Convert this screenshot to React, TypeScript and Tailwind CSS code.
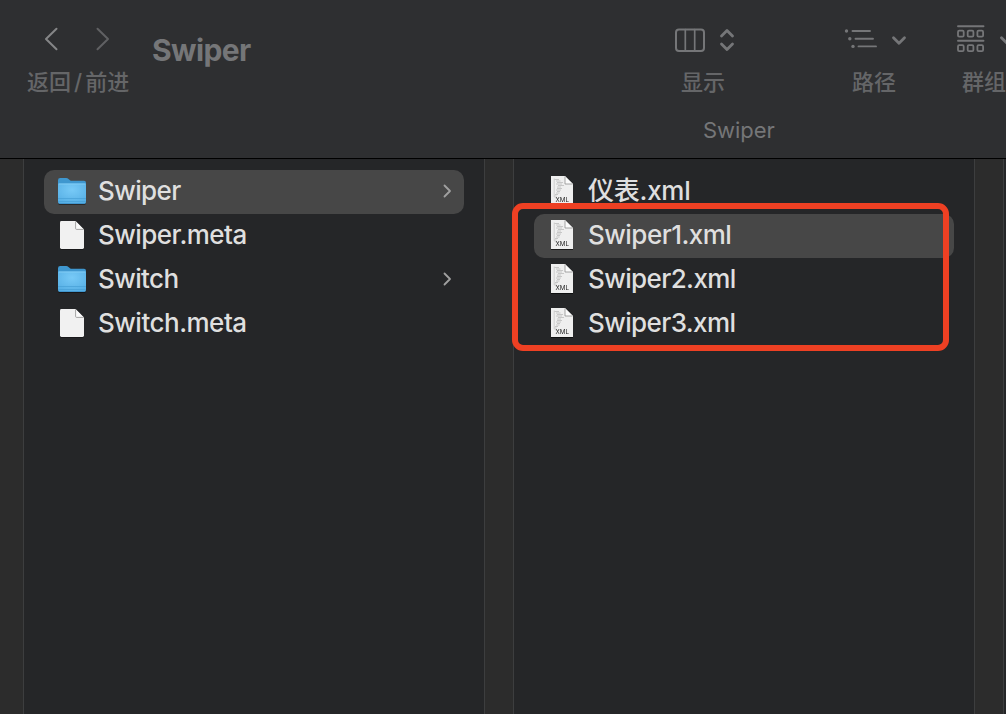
import type { ReactNode } from 'react';

type Kind = 'folder' | 'blank' | 'xml';
type Item = { name: string; kind: Kind; selected?: boolean; tracking: string };

const leftItems: Item[] = [
  { name: 'Swiper', kind: 'folder', selected: true, tracking: 'tracking-[-0.6px]' },
  { name: 'Swiper.meta', kind: 'blank', tracking: 'tracking-[-0.55px]' },
  { name: 'Switch', kind: 'folder', tracking: 'tracking-[-0.6px]' },
  { name: 'Switch.meta', kind: 'blank', tracking: 'tracking-[-0.5px]' },
];

const rightItems: Item[] = [
  { name: '仪表.xml', kind: 'xml', tracking: 'tracking-[-0.25px]' },
  { name: 'Swiper1.xml', kind: 'xml', selected: true, tracking: 'tracking-[-0.52px]' },
  { name: 'Swiper2.xml', kind: 'xml', tracking: 'tracking-[-0.6px]' },
  { name: 'Swiper3.xml', kind: 'xml', tracking: 'tracking-[-0.6px]' },
];

function FolderIcon() {
  return (
    <svg width="30" height="30" viewBox="0 0 30 30" className="drop-shadow-[0_1px_0.5px_rgba(0,0,0,0.4)]">
      <defs>
        <radialGradient id="folderFront" cx="0.5" cy="0.3" r="0.75">
          <stop offset="0" stopColor="#78caf7" />
          <stop offset="1" stopColor="#55aee4" />
        </radialGradient>
      </defs>
      <path d="M1 3.2Q1 1 3.2 1H9.2Q10.6 1 11.5 1.9L13 3.2Q13.6 3.8 14.8 3.8H27Q29 3.8 29 5.8V12H1Z" fill="#3f97cf" />
      <path d="M1 7.8Q1 6.5 2.3 6.5H27.7Q29 6.5 29 7.8V25Q29 27 27 27H3Q1 27 1 25Z" fill="url(#folderFront)" />
      <path d="M1.5 7H28.5" stroke="#8cd2f7" strokeWidth="0.8" />
      <path d="M1 21.5H29M1 24.5H29" stroke="#469fd6" strokeWidth="0.7" />
      <path d="M2 26.6H28" stroke="#3a8dc4" strokeWidth="0.8" />
    </svg>
  );
}

function BlankFileIcon() {
  return (
    <svg width="24" height="28" viewBox="0 0 24 28" className="mb-0.5 drop-shadow-[0_1px_0.5px_rgba(0,0,0,0.35)]">
      <path d="M1.4 0H15.6L24 8.4V26.6Q24 28 22.6 28H1.4Q0 28 0 26.6V1.4Q0 0 1.4 0Z" fill="#f1f1f1" />
      <path d="M15.6 0.2V7.4Q15.6 8.4 16.6 8.4H23.8Z" fill="#fafafa" />
      <path d="M15.6 0.4V7.4Q15.6 8.4 16.6 8.4H23.6" fill="none" stroke="#8f8f8f" strokeWidth="0.8" />
    </svg>
  );
}

const codeLines = [
  'M3 3.5H8', 'M5 5H9.5', 'M6 6.5H12', 'M5 8H11', 'M7 9.5H13', 'M6 11H10',
  'M6 12.5H11', 'M5 14H10', 'M6 15.5H9', 'M5 17H8.5', 'M4 18.5H7', 'M3 20H5.5',
].join('');

function XmlFileIcon() {
  return (
    <svg width="22" height="29" viewBox="0 0 22 29" className="mb-[3px] drop-shadow-[0_1px_0.5px_rgba(0,0,0,0.6)]">
      <path d="M0 0H14L22 8V29H0Z" fill="#efefef" />
      <path d={codeLines} stroke="#c2c2c2" strokeWidth="0.9" />
      <path d="M3.2 2.5V20.5L5 22.5" stroke="#cfcfcf" strokeWidth="1" fill="none" />
      <path d="M14 0.2V8H21.8Z" fill="#fbfbfb" />
      <path d="M14 0.4V8H21.6" fill="none" stroke="#8f8f8f" strokeWidth="0.8" />
      <text x="11.2" y="25.8" textAnchor="middle" textLength="13.4" lengthAdjust="spacingAndGlyphs" fontSize="5.8" fontFamily="Inter, sans-serif" fontWeight="400" fill="#1c1c1c">
        XML
      </text>
    </svg>
  );
}

function FileIcon({ kind }: { kind: Kind }) {
  if (kind === 'folder') return <FolderIcon />;
  if (kind === 'blank') return <BlankFileIcon />;
  return <XmlFileIcon />;
}

function Row({ item }: { item: Item }) {
  return (
    <li className={`flex h-11 items-center rounded-[10px] pl-3 pr-3 ${item.selected ? 'bg-[#474747]' : ''}`}>
      <span className="flex w-8 shrink-0 justify-center">
        <FileIcon kind={item.kind} />
      </span>
      <span className={`mb-0.5 ml-2.5 flex-1 whitespace-nowrap text-[26px] font-medium leading-8 text-[#dfdfdf] ${item.tracking}`}>{item.name}</span>
      {item.kind === 'folder' && (
        <svg width="9" height="14" viewBox="0 0 9 14" className="mb-0.5" fill="none" stroke="#a0a0a0" strokeWidth="1.8" strokeLinecap="round" strokeLinejoin="round">
          <path d="M1.5 1.5L7 7L1.5 12.5" />
        </svg>
      )}
    </li>
  );
}

function Column({ items, children }: { items: Item[]; children?: ReactNode }) {
  return (
    <section className="relative w-[461px] shrink-0 border-r border-[#3d3e3f] bg-[#252628] pl-5 pr-5 pt-[11px]">
      <ul>
        {items.map((item) => (
          <Row key={item.name} item={item} />
        ))}
      </ul>
      {children}
    </section>
  );
}

function Label({ children }: { children: ReactNode }) {
  return <span className="whitespace-nowrap text-[22px] font-medium leading-7 text-[#656668]">{children}</span>;
}

function Toolbar() {
  return (
    <header className="h-[159px] overflow-hidden border-b border-black bg-[#2e2f31]">
      <div className="flex h-[115px]">
        <div className="flex w-[152px] shrink-0 flex-col pl-[27px] pt-6">
          <div className="flex h-[30px] items-center gap-[38px] pl-[17px]">
            <svg width="14" height="24" viewBox="0 0 14 24" fill="none" stroke="#858687" strokeWidth="2" strokeLinecap="round" strokeLinejoin="round">
              <path d="M12.5 1.7L2 12L12.5 22.3" />
            </svg>
            <svg width="14" height="24" viewBox="0 0 14 24" fill="none" stroke="#606163" strokeWidth="2" strokeLinecap="round" strokeLinejoin="round">
              <path d="M1.5 1.7L12 12L1.5 22.3" />
            </svg>
          </div>
          <div className="mt-3.5 flex">
            <Label>返回</Label>
            <span className="mx-[3px] text-[22px] font-medium leading-7 text-[#656668]">/</span>
            <Label>前进</Label>
          </div>
        </div>
        <h1 className="w-[521px] shrink-0 pt-8 text-[30px] font-bold leading-9 tracking-[-0.6px] text-[#757678]">Swiper</h1>
        <div className="flex w-[171px] shrink-0 flex-col pt-6">
          <svg width="64" height="30" viewBox="0 0 64 30" fill="none" stroke="#757678" strokeLinecap="round" strokeLinejoin="round">
            <rect x="3" y="5.5" width="28" height="21.5" rx="3" strokeWidth="2" />
            <path d="M12.3 5.5V27M21.7 5.5V27" strokeWidth="1.7" />
            <path d="M48.5 12L54 6.4L59.5 12M48.5 20L54 25.6L59.5 20" strokeWidth="2.8" />
          </svg>
          <div className="mt-3.5 pl-2"><Label>显示</Label></div>
        </div>
        <div className="flex w-[111px] shrink-0 flex-col pt-6">
          <svg width="64" height="30" viewBox="0 0 64 30" fill="none" stroke="#757678" strokeLinecap="round" strokeLinejoin="round">
            <g fill="#757678" stroke="none">
              <circle cx="2.5" cy="7" r="1.7" />
              <circle cx="5.8" cy="14.7" r="1.7" />
              <circle cx="9" cy="22.4" r="1.7" />
            </g>
            <path d="M8.5 7H26M11.5 14.7H29M14.5 22.4H32" strokeWidth="1.9" />
            <path d="M49.5 13.7L55 19.3L60.5 13.7" strokeWidth="2.8" />
          </svg>
          <div className="mt-3.5 pl-2"><Label>路径</Label></div>
        </div>
        <div className="flex w-[70px] shrink-0 flex-col pt-6">
          <svg width="64" height="30" viewBox="0 0 64 30" fill="none" stroke="#757678" strokeLinecap="round" strokeLinejoin="round">
            <path d="M3 2.2H28.5M3 16.8H28.5" strokeWidth="1.9" />
            {[3, 12.7, 22.4].map((x) => (
              <g key={x} strokeWidth="1.8">
                <rect x={x} y="6.7" width="5.7" height="6" rx="1.2" />
                <rect x={x} y="21.2" width="5.7" height="6" rx="1.2" />
              </g>
            ))}
            <path d="M46.5 13.7L52 19.3L57.5 13.7" strokeWidth="2.8" />
          </svg>
          <div className="mt-3.5 pl-[7px]"><Label>群组</Label></div>
        </div>
      </div>
      <div className="pl-[703px] text-[22px] leading-[30px] tracking-[-0.05px] text-[#757678]">Swiper</div>
    </header>
  );
}

export default function App() {
  return (
    <div className="flex h-[714px] w-[1006px] flex-col overflow-hidden bg-[#252628] font-['Inter','Noto_Sans_CJK_SC',sans-serif]">
      <Toolbar />
      <main className="flex min-h-0 flex-1">
        <div className="w-6 shrink-0 border-r border-[#3d3e3f] bg-[#2c2c2c]" />
        <Column items={leftItems} />
        <div className="w-[29px] shrink-0 border-r border-[#3d3e3f] bg-[#2c2c2c]" />
        <Column items={rightItems}>
          <div className="absolute left-[-2px] top-[44px] h-[147.5px] w-[437px] rounded-[11px] border-[6px] border-[#ee4023]" />
        </Column>
        <div className="w-[29px] shrink-0 border-r border-[#3d3e3f] bg-[#2c2c2c]" />
      </main>
    </div>
  );
}
